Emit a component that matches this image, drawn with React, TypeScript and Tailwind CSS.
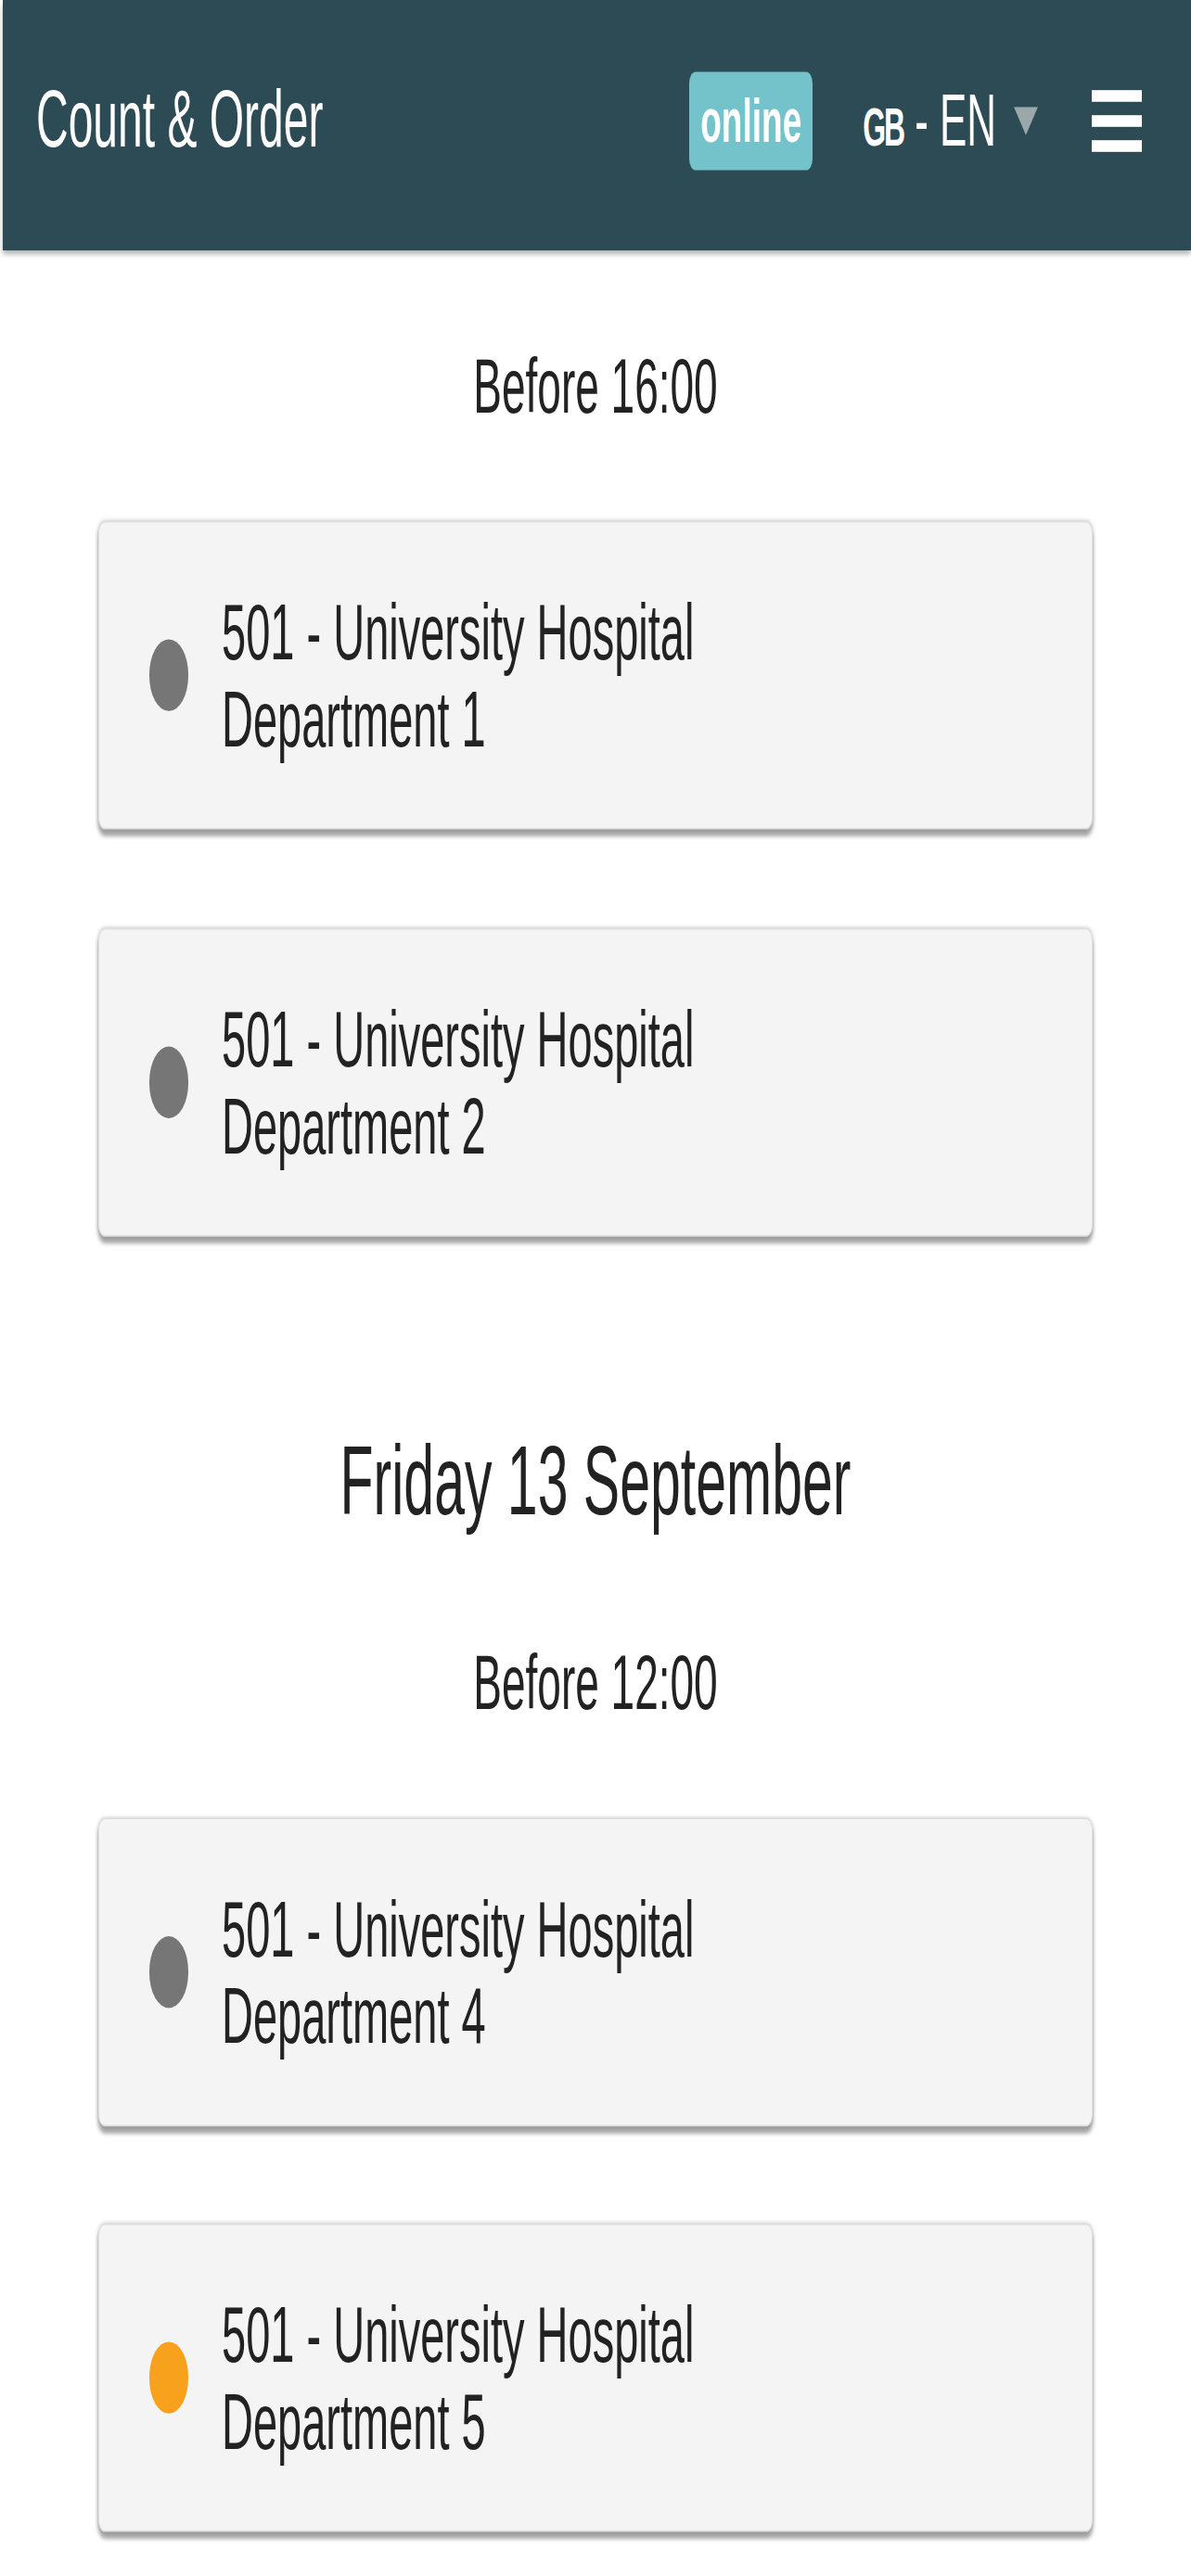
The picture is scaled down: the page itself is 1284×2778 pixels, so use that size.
interface StopCardProps {
  name: string;
  department: string;
  status: 'idle' | 'pending';
}

function StopCard(props: StopCardProps) {
  const dotColor = props.status === 'pending' ? 'bg-[#f8a11d]' : 'bg-[#767676]';

  return (
    <div className="flex h-[185px] items-center rounded-[7px] border border-[#dedede] bg-[#f4f4f4] pl-[54px] shadow-[0_4px_3px_rgba(0,0,0,0.34),0_0_3px_rgba(0,0,0,0.2)]">
      <span className={`h-[43px] w-[42px] shrink-0 rounded-full ${dotColor}`} />
      <div className="ml-[36px] text-[47px] leading-[52px] text-[#222]">
        <div>{props.name}</div>
        <div>{props.department}</div>
      </div>
    </div>
  );
}

function SlotTitle({ children }: { children: string }) {
  return <h3 className="text-center text-[46px] leading-none text-[#222]">{children}</h3>;
}

export default function App() {
  return (
    <div className="h-[2778px] w-full overflow-hidden bg-white">
      <div className="h-[1543px] w-[1284px] origin-top scale-y-[1.8] font-['Liberation_Sans',Arial,sans-serif]">
        <header className="ml-[3px] flex h-[150px] items-center bg-[#2d4b55] pb-[6px] pl-[36px] pr-[53px] text-white shadow-[0_3px_4px_rgba(0,0,0,0.3)]">
          <h1 className="text-[48px] leading-none">Count &amp; Order</h1>

          <div className="ml-auto flex items-center">
            <span className="rounded-[7px] bg-[#74c3ca] px-[12px] py-[11px] text-[37px] font-bold leading-none">
              online
            </span>

            <button className="ml-[54px] flex items-baseline text-white">
              <span className="text-[32px] font-bold tracking-[-2px]">GB</span>
              <span className="ml-[12px] text-[44px]">-</span>
              <span className="ml-[12px] text-[44px]">EN</span>
            </button>

            <svg
              className="ml-[19px] h-[17px] w-[26px] self-center"
              viewBox="0 0 26 17"
              aria-hidden="true"
            >
              <polygon points="0,0 26,0 13,17" fill="#9aa7ab" />
            </svg>

            <button className="ml-[58px] flex w-[54px] flex-col gap-[8px]" aria-label="menu">
              <span className="block h-[7px] w-full bg-white" />
              <span className="block h-[7px] w-full bg-white" />
              <span className="block h-[7px] w-full bg-white" />
            </button>
          </div>
        </header>

        <main className="px-[106px]">
          <div className="mt-[58px]">
            <SlotTitle>Before 16:00</SlotTitle>
          </div>

          <div className="mt-[58px] flex flex-col gap-[59px]">
            <StopCard name="501 - University Hospital" department="Department 1" status="idle" />
            <StopCard name="501 - University Hospital" department="Department 2" status="idle" />
          </div>

          <h2 className="mt-[117px] text-center text-[59px] leading-none text-[#222]">
            Friday 13 September
          </h2>

          <div className="mt-[68px]">
            <SlotTitle>Before 12:00</SlotTitle>
          </div>

          <div className="mt-[58px] flex flex-col gap-[58px]">
            <StopCard name="501 - University Hospital" department="Department 4" status="idle" />
            <StopCard name="501 - University Hospital" department="Department 5" status="pending" />
          </div>
        </main>
      </div>
    </div>
  );
}
